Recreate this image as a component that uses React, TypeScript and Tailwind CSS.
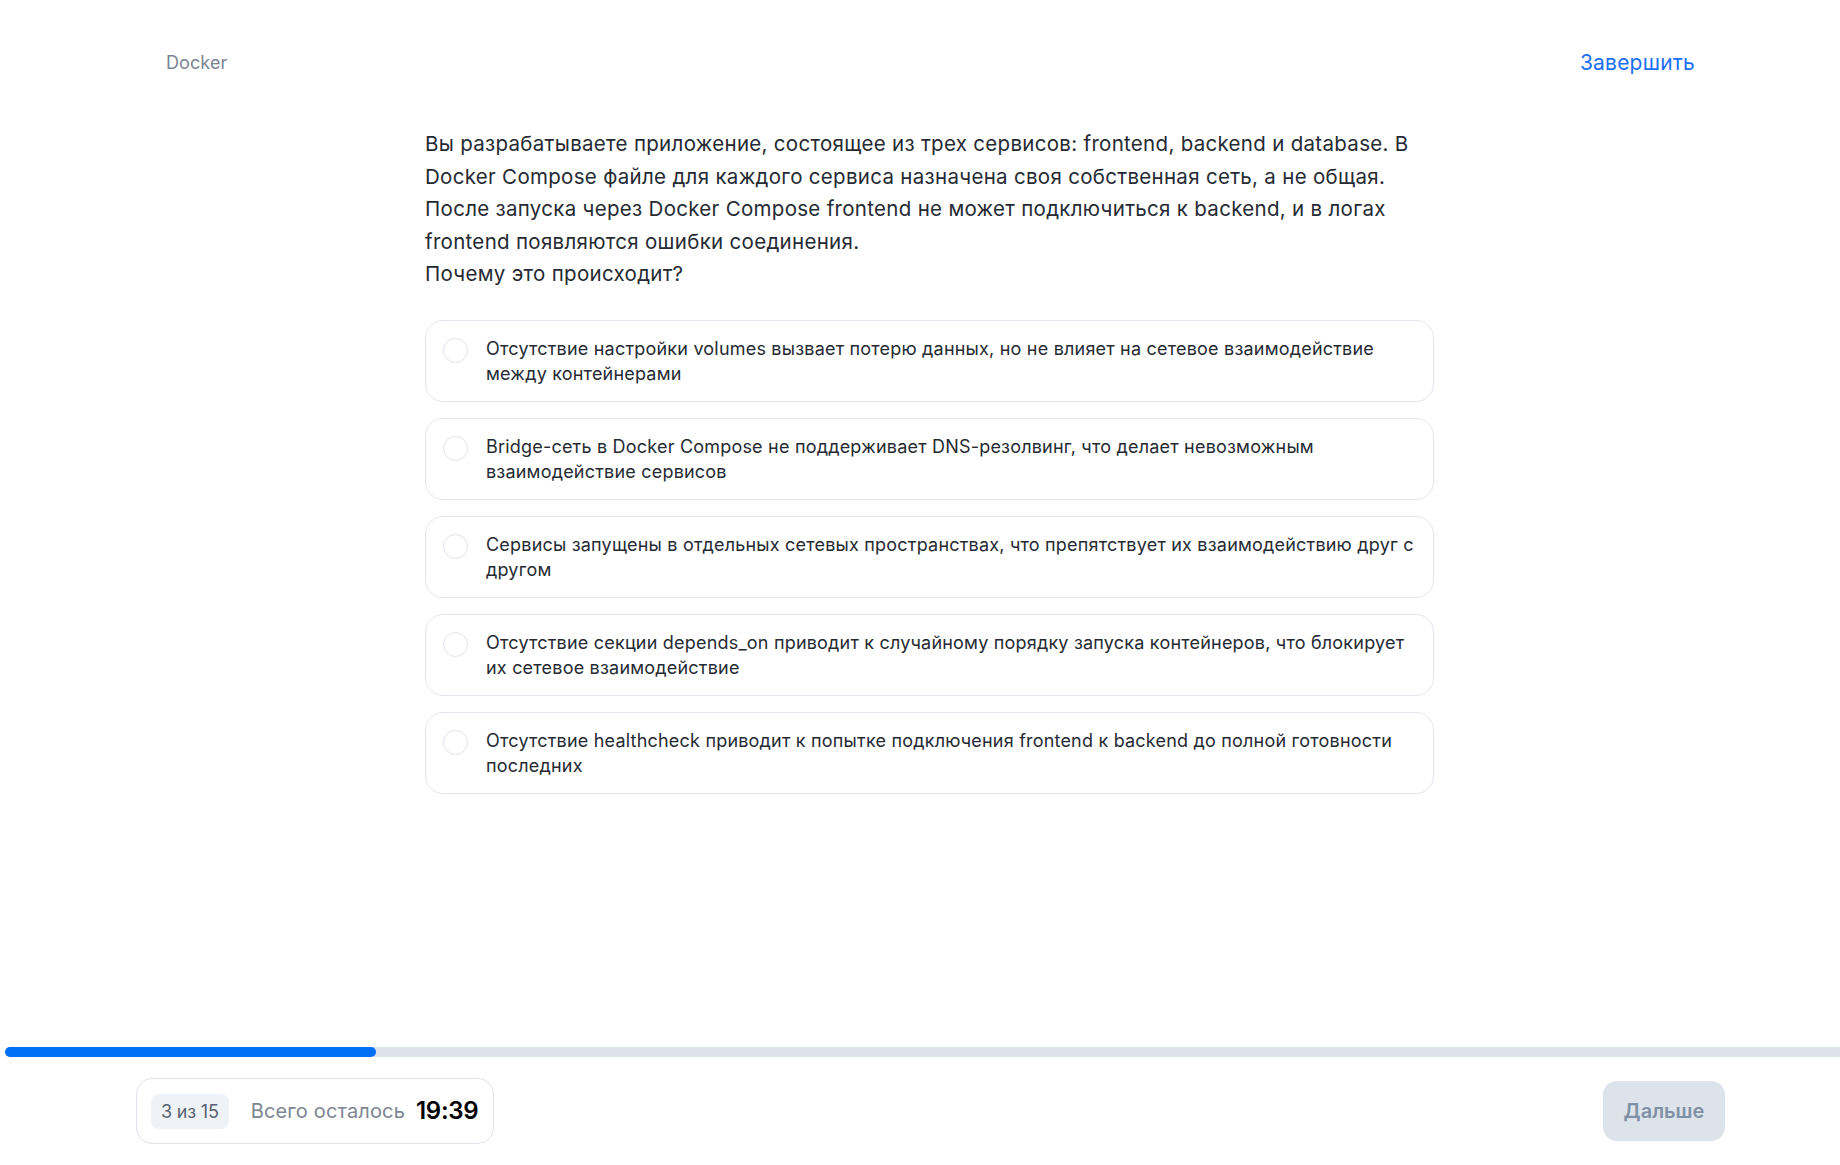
import React, { useState } from "react";

const question = [
    "Вы разрабатываете приложение, состоящее из трех сервисов: frontend, backend и database. В",
    "Docker Compose файле для каждого сервиса назначена своя собственная сеть, а не общая.",
    "После запуска через Docker Compose frontend не может подключиться к backend, и в логах",
    "frontend появляются ошибки соединения.",
    "Почему это происходит?",
];

const options = [
    "Отсутствие настройки volumes вызвает потерю данных, но не влияет на сетевое взаимодействие между контейнерами",
    "Bridge-сеть в Docker Compose не поддерживает DNS-резолвинг, что делает невозможным взаимодействие сервисов",
    "Сервисы запущены в отдельных сетевых пространствах, что препятствует их взаимодействию друг с другом",
    "Отсутствие секции depends_on приводит к случайному порядку запуска контейнеров, что блокирует их сетевое взаимодействие",
    "Отсутствие healthcheck приводит к попытке подключения frontend к backend до полной готовности последних",
];

export default function App() {
    const [selected, setSelected] = useState<number | null>(null);
    const current = 3;
    const total = 15;

    return (
        <div className="h-screen flex flex-col bg-white font-['Inter','Noto_Sans',sans-serif] text-[#262b33]">
            {/* Header */}
            <div className="flex items-center justify-between pl-[166px] pr-[145px] pt-[49px] h-[77px]">
                <span className="text-[18px] leading-[28px] tracking-[0.1px] text-[#7c8593]">Docker</span>
                <button className="text-[21px] leading-[28px] tracking-[0.2px] text-[#1b6ff5]">Завершить</button>
            </div>

            {/* Question */}
            <div className="flex-1 flex justify-center pl-[19px] pt-[51px]">
                <div className="w-[1009px]">
                    <div className="text-[20.5px] leading-[32.5px] tracking-[0.3px] text-[#262b33] whitespace-nowrap">
                        {question.map((line, i) => (
                            <div key={i}>{line}</div>
                        ))}
                    </div>

                    <div className="mt-[29px] flex flex-col gap-[16px]">
                        {options.map((opt, i) => (
                            <button
                                key={i}
                                onClick={() => setSelected(i)}
                                className="flex items-start text-left w-full border border-[#e2e6ed] rounded-[18px] pl-[17px] pr-[14px] py-[15px] bg-white"
                            >
                                <span
                                    className={
                                        selected === i
                                            ? "shrink-0 mt-[2px] w-[25px] h-[25px] rounded-full border-[7px] border-[#1b6ff5]"
                                            : "shrink-0 mt-[2px] w-[25px] h-[25px] rounded-full border-[1.5px] border-[#dfe3ea]"
                                    }
                                />
                                <span className="ml-[18px] text-[18px] leading-[25px] tracking-[0.2px] text-[#262b33]">
                                    {opt}
                                </span>
                            </button>
                        ))}
                    </div>
                </div>
            </div>

            {/* Footer */}
            <div className="pb-[21px]">
                <div className="ml-[5px] h-[10px] bg-[#dde3eb] rounded-l-full">
                    <div
                        className="h-full bg-[#006ef5] rounded-full"
                        style={{ width: `${(current / total) * 100 + 0.2}%` }}
                    />
                </div>
                <div className="mt-[21px] flex items-center justify-between pl-[136px] pr-[115px]">
                    <div className="flex items-center h-[66px] border border-[#dfe4ea] rounded-[16px] pl-[14px] pr-[15px]">
                        <span className="h-[35px] px-[10px] flex items-center rounded-[8px] bg-[#eff3f8] text-[18px] tracking-[-0.2px] text-[#5a6270]">
                            {current} из {total}
                        </span>
                        <span className="ml-[22px] text-[20px] tracking-[0.15px] text-[#7d8693]">Всего осталось</span>
                        <span className="ml-[11px] text-[24px] font-semibold text-black tracking-[-0.3px]">19:39</span>
                    </div>
                    <button className="w-[122px] h-[60px] rounded-[14px] bg-[#dde3eb] text-[20px] font-semibold text-[#8091a5]">
                        Дальше
                    </button>
                </div>
            </div>
        </div>
    );
}
